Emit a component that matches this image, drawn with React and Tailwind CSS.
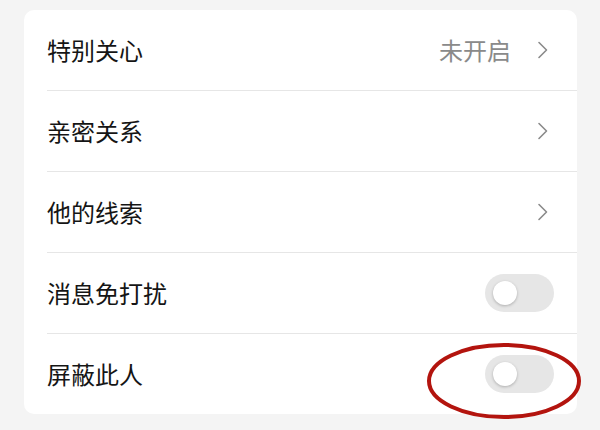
import { useState } from 'react'

function Chevron() {
  return (
    <svg width="12" height="18" viewBox="0 0 12 18" fill="none" className="ml-[26px] mr-[28px]">
      <path d="M2 1.5 L9.5 9 L2 16.5" stroke="#8a8a8a" strokeWidth="1.6" strokeLinecap="round" strokeLinejoin="round" />
    </svg>
  )
}

function Toggle({ on, onChange }) {
  return (
    <button
      onClick={onChange}
      className={`mr-[23px] w-[69px] h-[38px] rounded-full flex items-center px-[8px] ${on ? 'bg-[#07c160] justify-end' : 'bg-[#e6e6e6] justify-start'}`}
    >
      <span className="w-[24px] h-[24px] rounded-full bg-white shadow-[0_1px_3px_rgba(0,0,0,0.25)]" />
    </button>
  )
}

export default function App() {
  const [mute, setMute] = useState(false)
  const [block, setBlock] = useState(false)

  const rows = [
    { label: '特别关心', value: '未开启', kind: 'link' },
    { label: '亲密关系', kind: 'link' },
    { label: '他的线索', kind: 'link' },
    { label: '消息免打扰', kind: 'toggle', on: mute, set: () => setMute(!mute) },
    { label: '屏蔽此人', kind: 'toggle', on: block, set: () => setBlock(!block) },
  ]

  return (
    <div className="w-[600px] h-[430px] bg-[#f4f4f4] pt-[10px] pl-[24px] pr-[23px] font-['Noto_Sans_CJK_SC','Noto_Sans',sans-serif]">
      <div className="relative bg-white rounded-[10px]">
        {rows.map((r, i) => (
          <div key={r.label} className="pl-[23px]">
            {i > 0 && <div className="h-px bg-[#e6e6e6]" />}
            <div className="h-[80px] flex items-center justify-between">
              <span className="text-[24px] text-[#151515] leading-none">{r.label}</span>
              {r.kind === 'link' ? (
                <div className="flex items-center">
                  {r.value && <span className="text-[24px] text-[#8a8a8a] leading-none">{r.value}</span>}
                  <Chevron />
                </div>
              ) : (
                <Toggle on={r.on} onChange={r.set} />
              )}
            </div>
          </div>
        ))}

        {/* red annotation ring */}
        <svg className="absolute left-[402px] top-[332px] pointer-events-none" width="156" height="78" viewBox="0 0 156 78">
          <ellipse cx="78" cy="39" rx="75" ry="36" fill="none" stroke="#b3140e" strokeWidth="4" />
        </svg>
      </div>
    </div>
  )
}
